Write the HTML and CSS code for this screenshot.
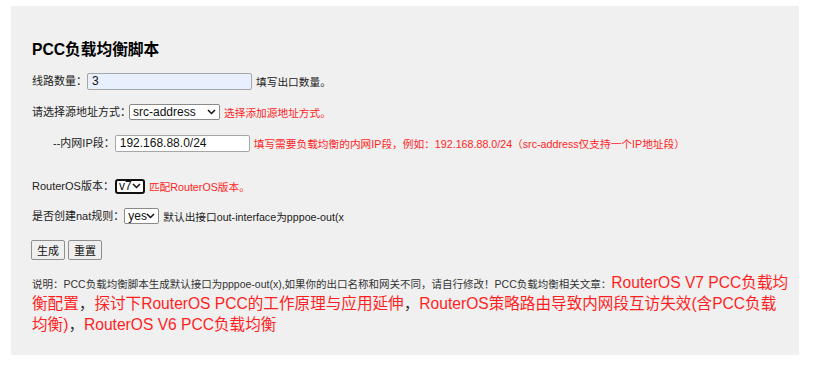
FILE: index.html
```html
<!DOCTYPE html>
<html lang="zh-CN">
<head>
    <meta charset="UTF-8">
    <meta name="viewport" content="width=device-width, initial-scale=1.0">
    <title>PCC负载均衡脚本</title>
    <link rel="stylesheet" href="styles.css">
</head>
<body>
    <div class="panel">
        <h1>PCC负载均衡脚本</h1>
        <form id="pccForm">
            <div class="row row-lines">
                <label for="lines">线路数量：</label>
                <input type="text" id="lines" class="input-lines" value="3">
                <span class="hint">填写出口数量。</span>
            </div>

            <div class="row row-src">
                <label for="srcType">请选择源地址方式：</label>
                <select id="srcType" class="select-src">
                    <option value="src-address">src-address</option>
                    <option value="dst-address">dst-address</option>
                </select>
                <span class="hint red">选择添加源地址方式。</span>
            </div>

            <div class="row row-ip">
                <label for="lanIp">--内网IP段：</label>
                <input type="text" id="lanIp" class="input-ip" value="192.168.88.0/24">
                <span class="hint red">填写需要负载均衡的内网IP段，例如：192.168.88.0/24（src-address仅支持一个IP地址段）</span>
            </div>

            <div class="row row-version">
                <label for="rosVersion">RouterOS版本：</label>
                <select id="rosVersion" class="select-version focused">
                    <option value="v7">v7</option>
                    <option value="v6">v6</option>
                </select>
                <span class="hint red">匹配RouterOS版本。</span>
            </div>

            <div class="row row-nat">
                <label for="natRule">是否创建nat规则：</label>
                <select id="natRule" class="select-nat">
                    <option value="yes">yes</option>
                    <option value="no">no</option>
                </select>
                <span class="hint">默认出接口out-interface为pppoe-out(x</span>
            </div>

            <div class="row row-buttons">
                <button type="button">生成</button>
                <button type="reset">重置</button>
            </div>
        </form>

        <p class="note">说明：PCC负载均衡脚本生成默认接口为pppoe-out(x),如果你的出口名称和网关不同，请自行修改！PCC负载均衡相关文章：<a href="#">RouterOS V7 PCC负载均衡配置</a><span class="sep">，</span><a href="#">探讨下RouterOS PCC的工作原理与应用延伸</a><span class="sep">，</span><a href="#">RouterOS策略路由导致内网段互访失效(含PCC负载均衡)</a><span class="sep">，</span><a href="#">RouterOS V6 PCC负载均衡</a></p>
    </div>
</body>
</html>
```

FILE: styles.css
```css
body {
    font-family: "Liberation Sans", "Noto Sans CJK SC", sans-serif;
    background-color: #ffffff;
    color: #222222;
    margin: 0;
    padding: 0;
}

.panel {
    background-color: #f0f0f0;
    margin: 6px 15px 0 11px;
    padding: 33px 8px 18px 21px;
}

h1 {
    font-size: 15.7px;
    line-height: 22px;
    font-weight: bold;
    color: #000000;
    margin: 0 0 10px 0;
}

.row {
    display: flex;
    align-items: center;
    height: 20px;
    font-size: 11px;
    white-space: nowrap;
}

.row label {
    line-height: 20px;
}

.row-src { margin-top: 11px; }
.row-ip { margin-top: 11px; padding-left: 21px; }
.row-version { margin-top: 23px; }
.row-nat { margin-top: 10px; }
.row-buttons { margin-top: 14px; gap: 3px; margin-left: -1px; }

.hint {
    margin-left: 4px;
    font-size: 10.7px;
}

.red {
    color: #ff1f1f;
}

input[type="text"] {
    box-sizing: border-box;
    height: 17px;
    padding: 0 4px;
    border: 1px solid #a6a6a6;
    border-radius: 2px;
    font-family: "Liberation Sans", sans-serif;
    font-size: 12px;
    color: #111111;
    background-color: #ffffff;
}

.input-lines {
    width: 165px;
    background-color: #e8f0fe !important;
}

.input-ip {
    width: 135px;
}

/* native arrow is too wide at this size, draw a small chevron instead */
select {
    -webkit-appearance: none;
    appearance: none;
    box-sizing: border-box;
    height: 16px;
    padding: 0 0 0 3px;
    border: 1px solid #8a8a8a;
    border-radius: 2px;
    background-color: #ffffff;
    background-image: url("data:image/svg+xml;utf8,<svg xmlns='http://www.w3.org/2000/svg' width='9' height='6' viewBox='0 0 9 6'><path d='M1 1l3.5 3.5L8 1' fill='none' stroke='%23111' stroke-width='1.5'/></svg>");
    background-repeat: no-repeat;
    background-position: right 3px center;
    font-family: "Liberation Sans", sans-serif;
    font-size: 12px;
    line-height: 14px;
    color: #111111;
}

.select-src {
    width: 91px;
    margin-left: -2px;
}

.select-version {
    width: 30px;
    margin-left: 1px;
}

.focused {
    border: 2px solid #111111;
    border-radius: 3px;
    height: 15px;
    padding-left: 2px;
    line-height: 11px;
    background-position: right 2px center;
}

.select-nat {
    width: 35px;
}

button {
    box-sizing: border-box;
    width: 34px;
    height: 20px;
    padding: 0;
    border: 1px solid #8f8f8f;
    border-radius: 2px;
    background-color: #efefef;
    font-family: "Liberation Sans", "Noto Sans CJK SC", sans-serif;
    font-size: 11px;
    color: #111111;
    cursor: pointer;
}

.note {
    margin: 14px 0 0 0;
    font-size: 10.5px;
    line-height: 21px;
    color: #333333;
}

.note a {
    font-size: 15.6px;
    line-height: 16px;
    color: #ff1f1f;
    text-decoration: none;
}

.note .sep {
    font-size: 15.6px;
    line-height: 16px;
}
```
